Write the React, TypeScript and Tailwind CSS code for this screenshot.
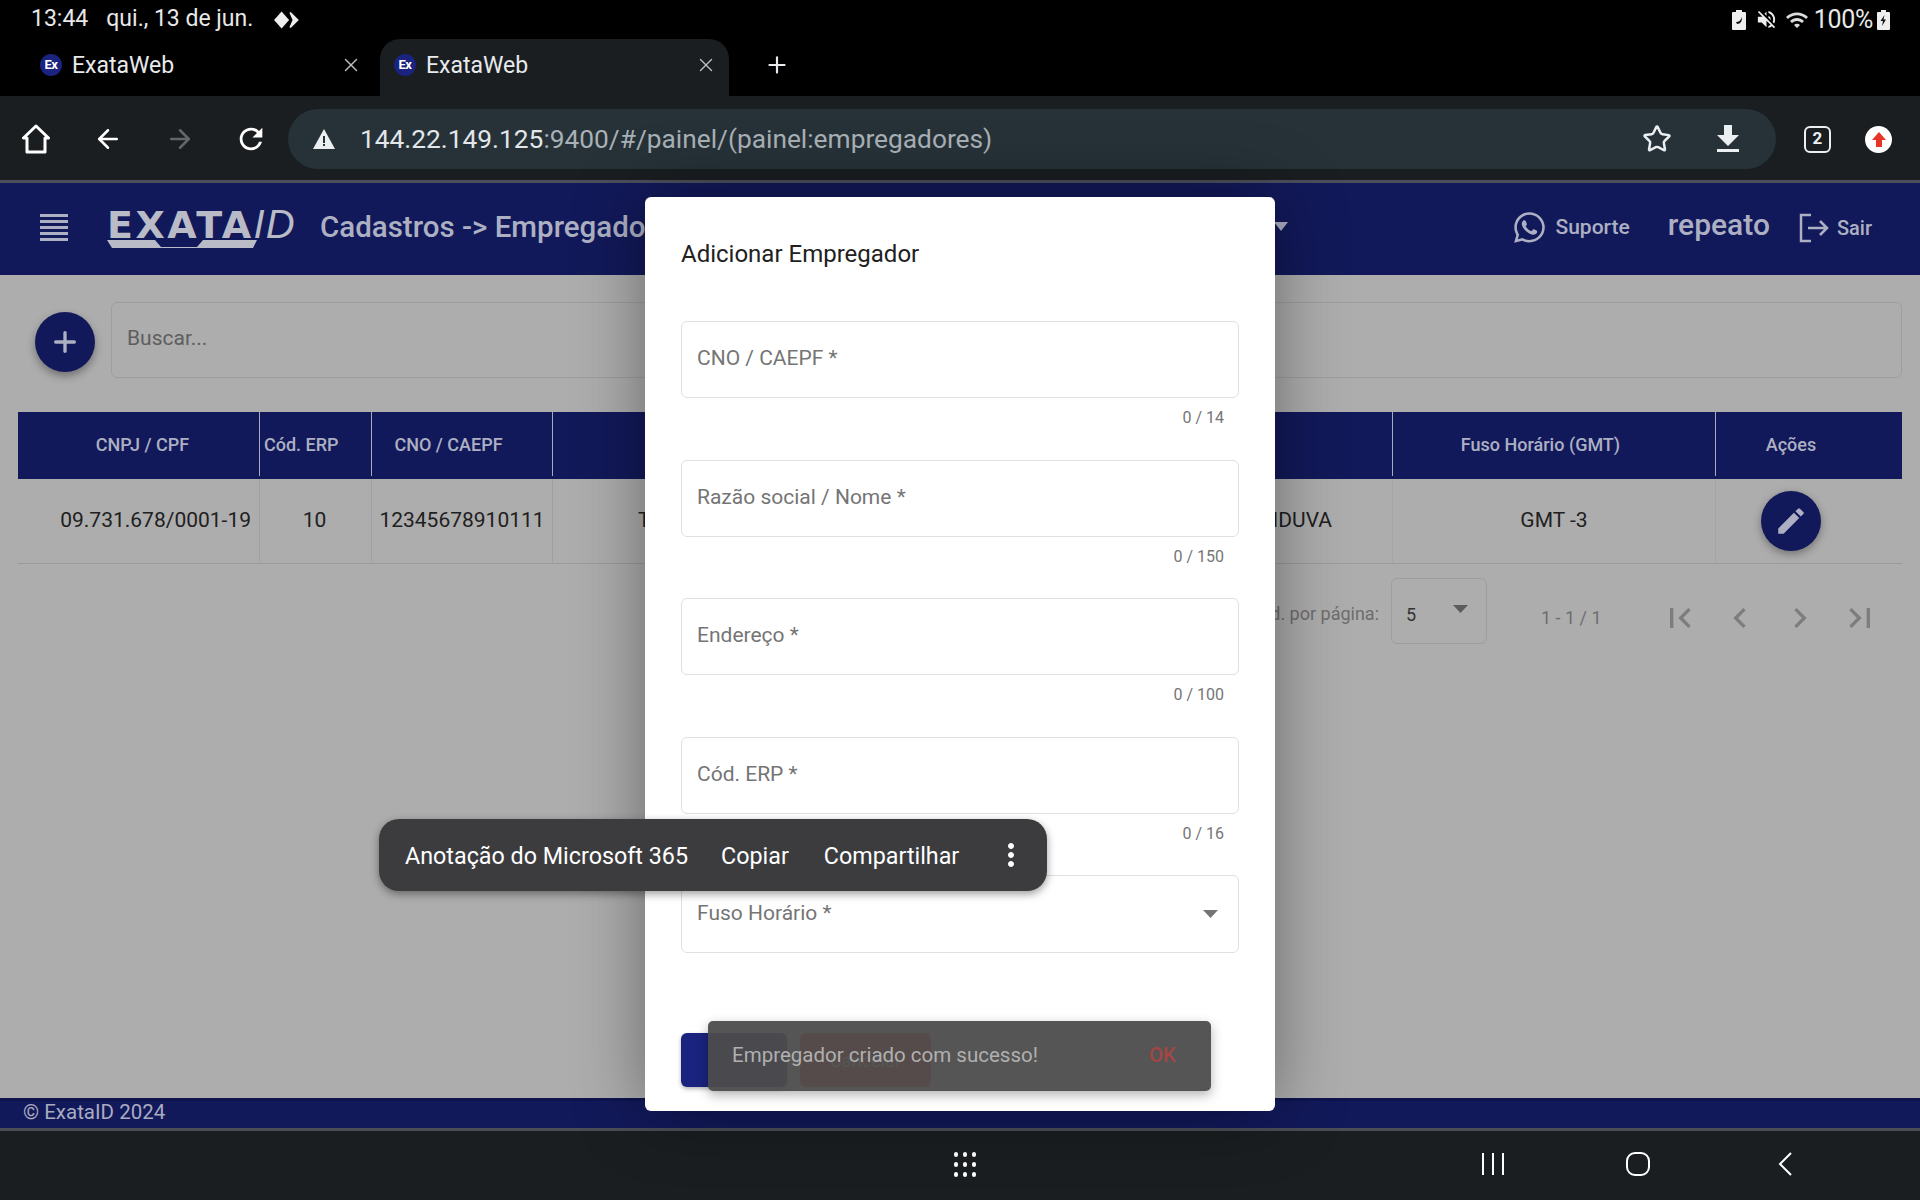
import { FaWhatsapp } from "react-icons/fa";
import {
  MdChevronLeft,
  MdChevronRight,
  MdEdit,
  MdFirstPage,
  MdLastPage,
  MdMoreVert,
  MdRefresh,
  MdVolumeOff,
  MdWifi,
} from "react-icons/md";
import { ArrowLeft, ArrowRight, Plus, Star, X } from "lucide-react";

const campos = [
  { label: "CNO / CAEPF *", count: "0 / 14" },
  { label: "Razão social / Nome *", count: "0 / 150" },
  { label: "Endereço *", count: "0 / 100" },
  { label: "Cód. ERP *", count: "0 / 16" },
];

function Favicon() {
  return (
    <div className="w-[22px] h-[22px] rounded-full bg-[#1a237e] flex items-center justify-center text-[13px] font-bold text-white tracking-[-0.5px]">
      Ex
    </div>
  );
}

function Tab({ active }: { active?: boolean }) {
  return (
    <div
      className={`h-[57px] w-[349px] pb-[5px] flex items-center rounded-t-[20px] ${
        active ? "bg-[#1a1e21] pl-[14px] pr-[12px]" : "pl-[9px] pr-[18px]"
      }`}
    >
      <Favicon />
      <span className="ml-[10px] text-[23px] text-[#e8eaed] leading-none">ExataWeb</span>
      <X className="ml-auto text-[#bdc1c6]" size={22} strokeWidth={1.5} />
    </div>
  );
}

function StatusBar() {
  return (
    <div className="h-[39px] bg-black flex items-center pl-[31px] pr-[30px] text-[23px] text-[#e8e8e8] shrink-0">
      <span>13:44</span>
      <span className="ml-[18px]">qui., 13 de jun.</span>
      <svg className="ml-[20px]" width="29" height="20" viewBox="0 0 27 18" fill="#eee">
        <path d="M8 1 15 9 8 17 1 9Z" />
        <path d="M16 2 23 9 16 16 19 9Z" stroke="#eee" strokeWidth="1.5" />
      </svg>
      <div className="ml-auto flex items-center">
        <svg width="14" height="20" viewBox="0 0 14 20" fill="#eee">
          <path d="M4 0h6v2h3a1 1 0 0 1 1 1v16a1 1 0 0 1-1 1H1a1 1 0 0 1-1-1V3a1 1 0 0 1 1-1h3Z" />
          <path d="M4 12c3 0 5-2 6-5 0 4-1 7-5 7Z" fill="#111" />
        </svg>
        <MdVolumeOff className="ml-[9px] text-[#eee]" size={23} />
        <MdWifi className="ml-[7px] text-[#ddd]" size={24} />
        <span className="ml-[5px] text-[25px] tracking-[-0.3px]">100%</span>
        <svg className="ml-[4px]" width="13" height="20" viewBox="0 0 13 20" fill="#eee">
          <path d="M4 0h5v2h3a1 1 0 0 1 1 1v16a1 1 0 0 1-1 1H1a1 1 0 0 1-1-1V3a1 1 0 0 1 1-1h3Z" />
          <path d="M7.500 5 3.500 11h2.500l-1 5 4-6.500H6.500Z" fill="#111" />
        </svg>
      </div>
    </div>
  );
}

function BrowserBar() {
  return (
    <div className="h-[84px] bg-[#1a1e21] flex items-center pl-[22px] pt-[2px] shrink-0">
      <svg width="28" height="30" viewBox="0 0 28 30" fill="none" stroke="#fff" strokeWidth="3" strokeLinejoin="round">
        <path d="M14 2 1.500 14H5v14h18V14h3.500Z" />
      </svg>
      <ArrowLeft className="ml-[43px] text-white" size={30} strokeWidth={2} />
      <ArrowRight className="ml-[42px] text-[#62666a]" size={30} strokeWidth={2} />
      <MdRefresh className="ml-[39px] text-white" size={34} />
      <div className="ml-[20px] w-[1488px] h-[60px] rounded-full bg-[#263238] flex items-center pl-[24px] pr-[36px]">
        <svg width="24" height="22" viewBox="0 0 24 22" fill="#eceff1">
          <path d="M12 1 23 21H1Z" />
          <path d="M11 8h2v7h-2zM11 16h2v2h-2z" fill="#263238" />
        </svg>
        <span className="ml-[24px] text-[26.300px] text-[#e3e7ea] leading-none">
          144.22.149.125<span className="text-[#a9b1b6]">:9400/#/painel/(painel:empregadores)</span>
        </span>
        <Star className="ml-auto text-[#eceff1]" size={30} strokeWidth={2} />
        <svg className="ml-[44px]" width="24" height="28" viewBox="0 0 24 28" fill="#eceff1">
          <path d="M8 0h8v10h7L12 21 1 10h7ZM1 24h22v3H1Z" />
        </svg>
      </div>
      <div className="ml-[28px] w-[27px] h-[27px] rounded-[6px] border-2 border-[#eceff1] flex items-center justify-center text-[17px] font-bold text-[#eceff1]">
        2
      </div>
      <div className="ml-[34px] w-[27px] h-[27px] rounded-full bg-white flex items-center justify-center">
        <svg width="14" height="15" viewBox="0 0 14 15" fill="#e53528">
          <path d="M7 0 14 8H10V15H4V8H0Z" />
        </svg>
      </div>
    </div>
  );
}

function AppHeader() {
  return (
    <div className="h-[95px] bg-[#12195a] border-t-[3px] border-[#4b4f5c] flex items-center pl-[40px] pr-[48px] pb-[3px] text-[#adb0c3] shrink-0">
      <div className="w-[28px] flex flex-col gap-[3px]">
        <div className="h-[3px] bg-[#adb0c3]" />
        <div className="h-[3px] bg-[#adb0c3]" />
        <div className="h-[3px] bg-[#adb0c3]" />
        <div className="h-[3px] bg-[#adb0c3]" />
        <div className="h-[3px] bg-[#adb0c3]" />
      </div>
      <div className="ml-[39px] relative w-[190px] h-[40px] flex items-baseline leading-[32px] whitespace-nowrap">
        <span className="font-['DejaVu_Sans',sans-serif] text-[38px] font-bold tracking-[2.500px] text-[#b9bbc6]">EXATA</span>
        <span className="font-['Liberation_Sans',sans-serif] text-[40px] italic tracking-[1px] text-[#b9bbc6]">ID</span>
        <svg className="absolute left-0 top-[29px]" width="150" height="12" viewBox="0 0 150 12" fill="#b9bbc6">
          <path d="M0 3h48l6 7h36l6-7h54l-4 8H5Z" />
        </svg>
      </div>
      <span className="ml-[23px] text-[29.500px] font-medium whitespace-nowrap">Cadastros -&gt; Empregadores</span>
      <svg className="absolute left-[1274px] top-[222px]" width="14" height="9" viewBox="0 0 14 9" fill="#adb0c3">
        <path d="M0 0h14L7 9Z" />
      </svg>
      <FaWhatsapp className="ml-auto" size={35} />
      <span className="ml-[8px] text-[21px] font-medium">Suporte</span>
      <span className="ml-[38px] text-[30px] font-medium -mt-[6px]">repeato</span>
      <svg className="ml-[29px]" width="30" height="30" viewBox="0 0 30 30" fill="none" stroke="#adb0c3" strokeWidth="2.500">
        <path d="M12 2H2v26h10M9 15h19M21 8l7 7-7 7" />
      </svg>
      <span className="ml-[8px] text-[20px] font-medium">Sair</span>
    </div>
  );
}

function Tabela() {
  return (
    <div className="mt-[34px] w-[1884px] ml-[18px]">
      <div className="grid grid-cols-[241px_112px_181px_428px_412px_323px_187px] h-[67px] pb-[3px] bg-[#12195a] text-[18px] font-medium text-[#adb0c3]">
        <div className="flex items-center justify-center pl-[18px] pr-[10px]">CNPJ / CPF</div>
        <div className="flex items-center pl-[4px] border-l border-[#a8aabb]">Cód. ERP</div>
        <div className="flex items-center justify-center pr-[27px] border-l border-[#a8aabb]">CNO / CAEPF</div>
        <div className="border-l border-[#a8aabb]" />
        <div />
        <div className="flex items-center justify-center pr-[27px] border-l border-[#a8aabb]">Fuso Horário (GMT)</div>
        <div className="flex items-center justify-center pr-[36px] border-l border-[#a8aabb]">Ações</div>
      </div>
      <div className="grid grid-cols-[241px_112px_181px_428px_412px_323px_187px] h-[85px] border-b border-[#9b9b9b] text-[21px] text-[#202020]">
        <div className="flex items-center justify-end pr-[8px]">09.731.678/0001-19</div>
        <div className="flex items-center justify-center pr-[2px] border-l border-[#a0a0a0]">10</div>
        <div className="flex items-center justify-center border-l border-[#a0a0a0]">12345678910111</div>
        <div className="flex items-center pl-[85px] border-l border-[#a0a0a0]">T</div>
        <div className="flex items-center justify-end pr-[60px]">IDUVA</div>
        <div className="flex items-center justify-center border-l border-[#a5a5a5]">GMT -3</div>
        <div className="flex items-center justify-center pr-[37px] border-l border-[#a5a5a5]">
          <div className="w-[60px] h-[60px] rounded-full bg-[#12195a] flex items-center justify-center shadow-[0_3px_8px_rgba(0,0,0,0.35)]">
            <MdEdit className="text-[#adb0c3]" size={34} />
          </div>
        </div>
      </div>
    </div>
  );
}

function Paginacao() {
  return (
    <div className="mt-[14px] pr-[40px] flex justify-end items-center h-[66px] text-[#6e6e6e]">
      <span className="text-[18px] mt-[4px]">Qtd. por página:</span>
      <div className="ml-[12px] w-[96px] h-[66px] border border-[#9e9e9e] rounded-[6px] flex items-center pl-[14px] pr-[18px]">
        <span className="text-[18px] text-[#333] mt-[6px]">5</span>
        <svg className="ml-auto -mt-[4px]" width="15" height="8" viewBox="0 0 15 8" fill="#5c5c5c">
          <path d="M0 0h15L7.500 8Z" />
        </svg>
      </div>
      <span className="ml-[54px] text-[18px] mt-[12px] w-[60px] whitespace-nowrap">1 - 1 / 1</span>
      <div className="ml-[59px] flex items-center gap-[20px] mt-[13px] text-[#7d7d7d]">
        <MdFirstPage size={40} />
        <MdChevronLeft size={40} />
        <MdChevronRight size={40} />
        <MdLastPage size={40} />
      </div>
    </div>
  );
}

function Modal() {
  return (
    <div className="absolute left-[645px] top-[197px] w-[630px] h-[914px] bg-white rounded-[6px] px-[36px] shadow-[0_0_70px_rgba(0,0,0,0.4)]">
      <h2 className="pt-[42px] text-[24px] leading-[30px] text-[#212121]">Adicionar Empregador</h2>
      <div className="mt-[52px]">
        {campos.map((c) => (
          <div key={c.label} className="h-[138.500px]">
            <div className="h-[77px] border border-[#e0e0e0] rounded-[6px] pl-[15px] pt-[22px] text-[21px] leading-[28px] text-[#757575]">
              {c.label}
            </div>
            <div className="pr-[15px] mt-[10px] text-right text-[16px] leading-[20px] text-[#757575]">{c.count}</div>
          </div>
        ))}
        <div className="h-[78px] border border-[#e0e0e0] rounded-[6px] pl-[15px] pr-[20px] pt-[23px] flex text-[21px] leading-[28px] text-[#757575]">
          Fuso Horário *
          <svg className="ml-auto mt-[11px]" width="15" height="8" viewBox="0 0 15 8" fill="#757575">
            <path d="M0 0h15L7.500 8Z" />
          </svg>
        </div>
      </div>
      <div className="mt-[80px] flex gap-[13px]">
        <div className="w-[106px] h-[54px] rounded-[6px] bg-[#1a237e] flex items-center justify-center text-[#1a237e] text-[18px] shadow-[0_2px_4px_rgba(0,0,0,0.3)]">
          Salvar
        </div>
        <div className="w-[131px] h-[54px] rounded-[6px] bg-[#f44336] flex items-center justify-center text-white text-[18px]">
          Cancelar
        </div>
      </div>
    </div>
  );
}

function Snackbar() {
  return (
    <div className="absolute left-[708px] top-[1021px] w-[503px] h-[70px] rounded-[5px] bg-[#4c4c4c]/95 flex items-center pl-[24px] pr-[35px] pb-[2px] text-[20.500px] text-[#b0b0b0] shadow-[0_4px_12px_rgba(0,0,0,0.3)]">
      Empregador criado com sucesso!
      <span className="ml-auto font-medium text-[#a34644]">OK</span>
    </div>
  );
}

function SelectionToolbar() {
  return (
    <div className="absolute left-[379px] top-[819px] w-[668px] h-[72px] rounded-[20px] bg-[#3c3c3f] flex items-center pl-[26px] pt-[3px] text-[23.300px] text-white shadow-[0_3px_8px_rgba(0,0,0,0.4)]">
      <span>Anotação do Microsoft 365</span>
      <span className="ml-[33px]">Copiar</span>
      <span className="ml-[35px]">Compartilhar</span>
      <MdMoreVert className="ml-[34px] -mt-[3px]" size={36} />
    </div>
  );
}

function NavBar() {
  return (
    <div className="h-[72px] bg-[#1a1e21] border-t-[3px] border-[#4b4f55] relative shrink-0 flex items-center pb-[3px]">
      <div className="ml-[954px] grid grid-cols-3 gap-[5px]">
        {[0, 1, 2, 3, 4, 5, 6, 7, 8].map((i) => (
          <div key={i} className="w-[4px] h-[5px] rounded-full bg-white" />
        ))}
      </div>
      <svg className="ml-[505px]" width="24" height="24" viewBox="0 0 24 24" fill="none" stroke="#fff" strokeWidth="2">
        <path d="M2 1v22M12 1v22M22 1v22" />
      </svg>
      <svg className="ml-[121px]" width="24" height="24" viewBox="0 0 24 24" fill="none" stroke="#fff" strokeWidth="2">
        <rect x="1" y="1" width="22" height="22" rx="8" />
      </svg>
      <svg className="ml-[128px]" width="14" height="24" viewBox="0 0 14 24" fill="none" stroke="#fff" strokeWidth="2">
        <path d="M13 1 2 12l11 11" />
      </svg>
    </div>
  );
}

export default function App() {
  return (
    <div className="relative w-[1920px] h-[1200px] overflow-hidden flex flex-col bg-[#adadad] font-['Roboto',sans-serif]">
      <StatusBar />
      <div className="h-[57px] bg-black flex shrink-0 items-center pl-[31px]">
        <Tab />
        <Tab active />
        <Plus className="ml-[35px] mb-[5px] text-[#e8eaed]" size={26} strokeWidth={2} />
      </div>
      <BrowserBar />
      <AppHeader />

      <div className="flex-1 min-h-0 bg-[#adadad]">
        <div className="mt-[27px] ml-[35px] mr-[18px] flex items-start">
          <div className="mt-[10px] w-[60px] h-[60px] rounded-full bg-[#12195a] flex items-center justify-center shadow-[0_4px_8px_rgba(0,0,0,0.35)]">
            <Plus className="text-[#adb0c3]" size={32} strokeWidth={2.500} />
          </div>
          <div className="ml-[16px] flex-1 h-[76px] border border-[#9e9e9e] rounded-[6px] pl-[15px] pt-[21px] text-[21px] leading-[28px] text-[#5e5e5e]">
            Buscar...
          </div>
        </div>
        <Tabela />
        <Paginacao />
      </div>

      <div className="h-[30px] bg-[#12195a] border-t-[3px] border-[#0e1450] pl-[23px] text-[20.500px] leading-[23px] text-[#a9abc0] shrink-0">
        © ExataID 2024
      </div>
      <NavBar />

      <Modal />
      <SelectionToolbar />
      <Snackbar />
    </div>
  );
}
